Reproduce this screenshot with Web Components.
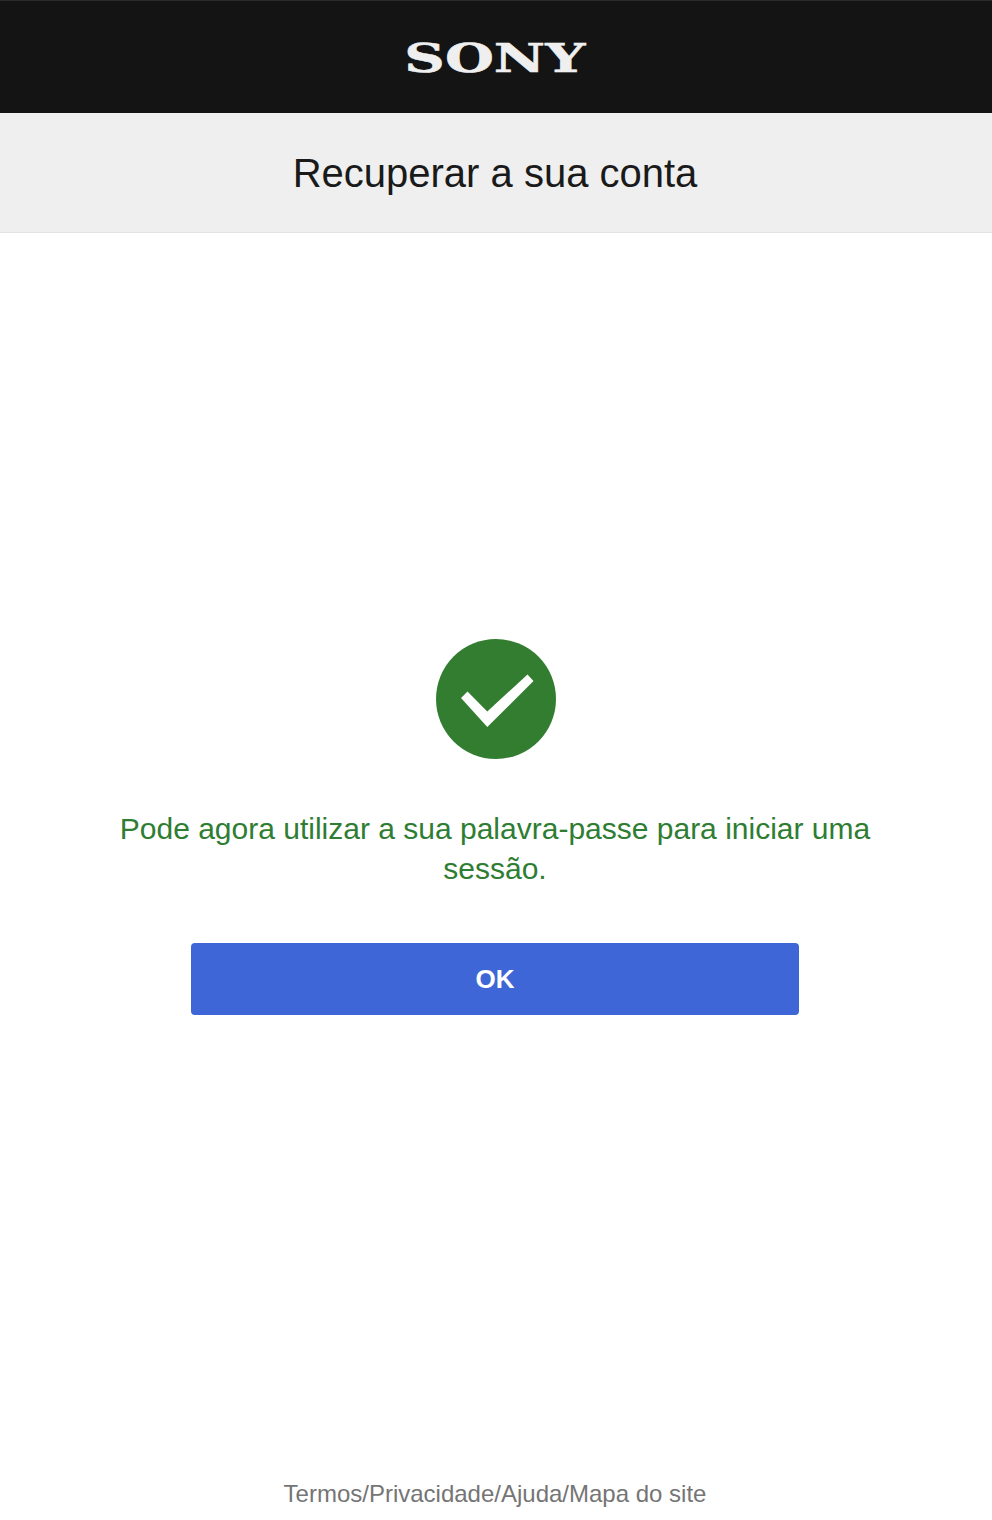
<!DOCTYPE html>
<html lang="pt">
<head>
<meta charset="utf-8">
<title>Recuperar a sua conta</title>
<style>
  html, body { margin: 0; padding: 0; background: #fff; }
  body { font-family: "Liberation Sans", Arial, sans-serif; }
</style>
</head>
<body>
<account-page>
  <span slot="title">Recuperar a sua conta</span>
  <success-message>Pode agora utilizar a sua palavra-passe para iniciar uma sessão.</success-message>
  <ok-button>OK</ok-button>
</account-page>

<script>
// Logo is real text, stretched to the wide Sony proportions
class SonyHeader extends HTMLElement {
  constructor() {
    super();
    this.attachShadow({ mode: 'open' }).innerHTML = `
      <style>
        :host { display: flex; justify-content: center; align-items: center; height: 110px; padding-top: 2px; background: #141414; border-top: 1px solid #2a2a2a; }
        .logo { display: inline-block; margin-right: 2px; transform: scaleX(1.44); font-family: "DejaVu Serif", serif; font-weight: 700; font-size: 39px; line-height: 44px; color: #efefef; -webkit-text-stroke: 0.5px #efefef; }
      </style>
      <span class="logo">SONY</span>`;
  }
}

class TitleBar extends HTMLElement {
  constructor() {
    super();
    this.attachShadow({ mode: 'open' }).innerHTML = `
      <style>
        :host { display: flex; justify-content: center; align-items: center; height: 117px; padding: 2px 2px 0 0; background: #efefef; border-bottom: 1px solid #e3e3e3; color: #1a1a1a; font-size: 40px; }
        h1 { margin: 0; font: inherit; }
      </style>
      <h1><slot></slot></h1>`;
  }
}

class SuccessMessage extends HTMLElement {
  constructor() {
    super();
    this.attachShadow({ mode: 'open' }).innerHTML = `
      <style>
        :host { display: flex; flex-direction: column; align-items: center; gap: 50px; color: #2e7d32; }
        .icon { display: block; width: 120px; height: 120px; margin-left: 2px; }
        p { margin: 0; font-size: 30px; line-height: 40px; text-align: center; width: 800px; }
      </style>
      <svg class="icon" viewBox="0 0 120 120">
        <circle cx="60" cy="60" r="60" fill="#337d31"/>
        <polygon points="25,59 31.500,52.500 51.300,72.500 91.500,35.500 97.500,42 51.300,88" fill="#fff"/>
      </svg>
      <p><slot></slot></p>`;
  }
}

class OkButton extends HTMLElement {
  constructor() {
    super();
    this.attachShadow({ mode: 'open' }).innerHTML = `
      <style>
        :host { display: block; }
        button { display: block; width: 608px; height: 72px; padding: 0; border: 0; border-radius: 4px; background: #3f66d6; color: #fff; font: 700 26px "Liberation Sans", Arial, sans-serif; cursor: pointer; }
      </style>
      <button><slot></slot></button>`;
  }
}

class SiteFooter extends HTMLElement {
  constructor() {
    super();
    this.attachShadow({ mode: 'open' }).innerHTML = `
      <style>
        :host { display: flex; justify-content: center; color: #757575; font-size: 24px; line-height: 28px; }
      </style>
      <div>Termos/Privacidade/Ajuda/Mapa do site</div>`;
  }
}

class AccountPage extends HTMLElement {
  constructor() {
    super();
    this.attachShadow({ mode: 'open' }).innerHTML = `
      <style>
        :host { display: flex; flex-direction: column; height: 1520px; overflow: hidden; }
        main { flex: 1; display: flex; flex-direction: column; align-items: center; padding: 406px 2px 0 0; gap: 54px; }
        site-footer { padding: 0 2px 12px 0; }
      </style>
      <sony-header></sony-header>
      <title-bar><slot name="title"></slot></title-bar>
      <main><slot></slot></main>
      <site-footer></site-footer>`;
  }
}

customElements.define('sony-header', SonyHeader);
customElements.define('title-bar', TitleBar);
customElements.define('success-message', SuccessMessage);
customElements.define('ok-button', OkButton);
customElements.define('site-footer', SiteFooter);
customElements.define('account-page', AccountPage);
</script>
</body>
</html>
